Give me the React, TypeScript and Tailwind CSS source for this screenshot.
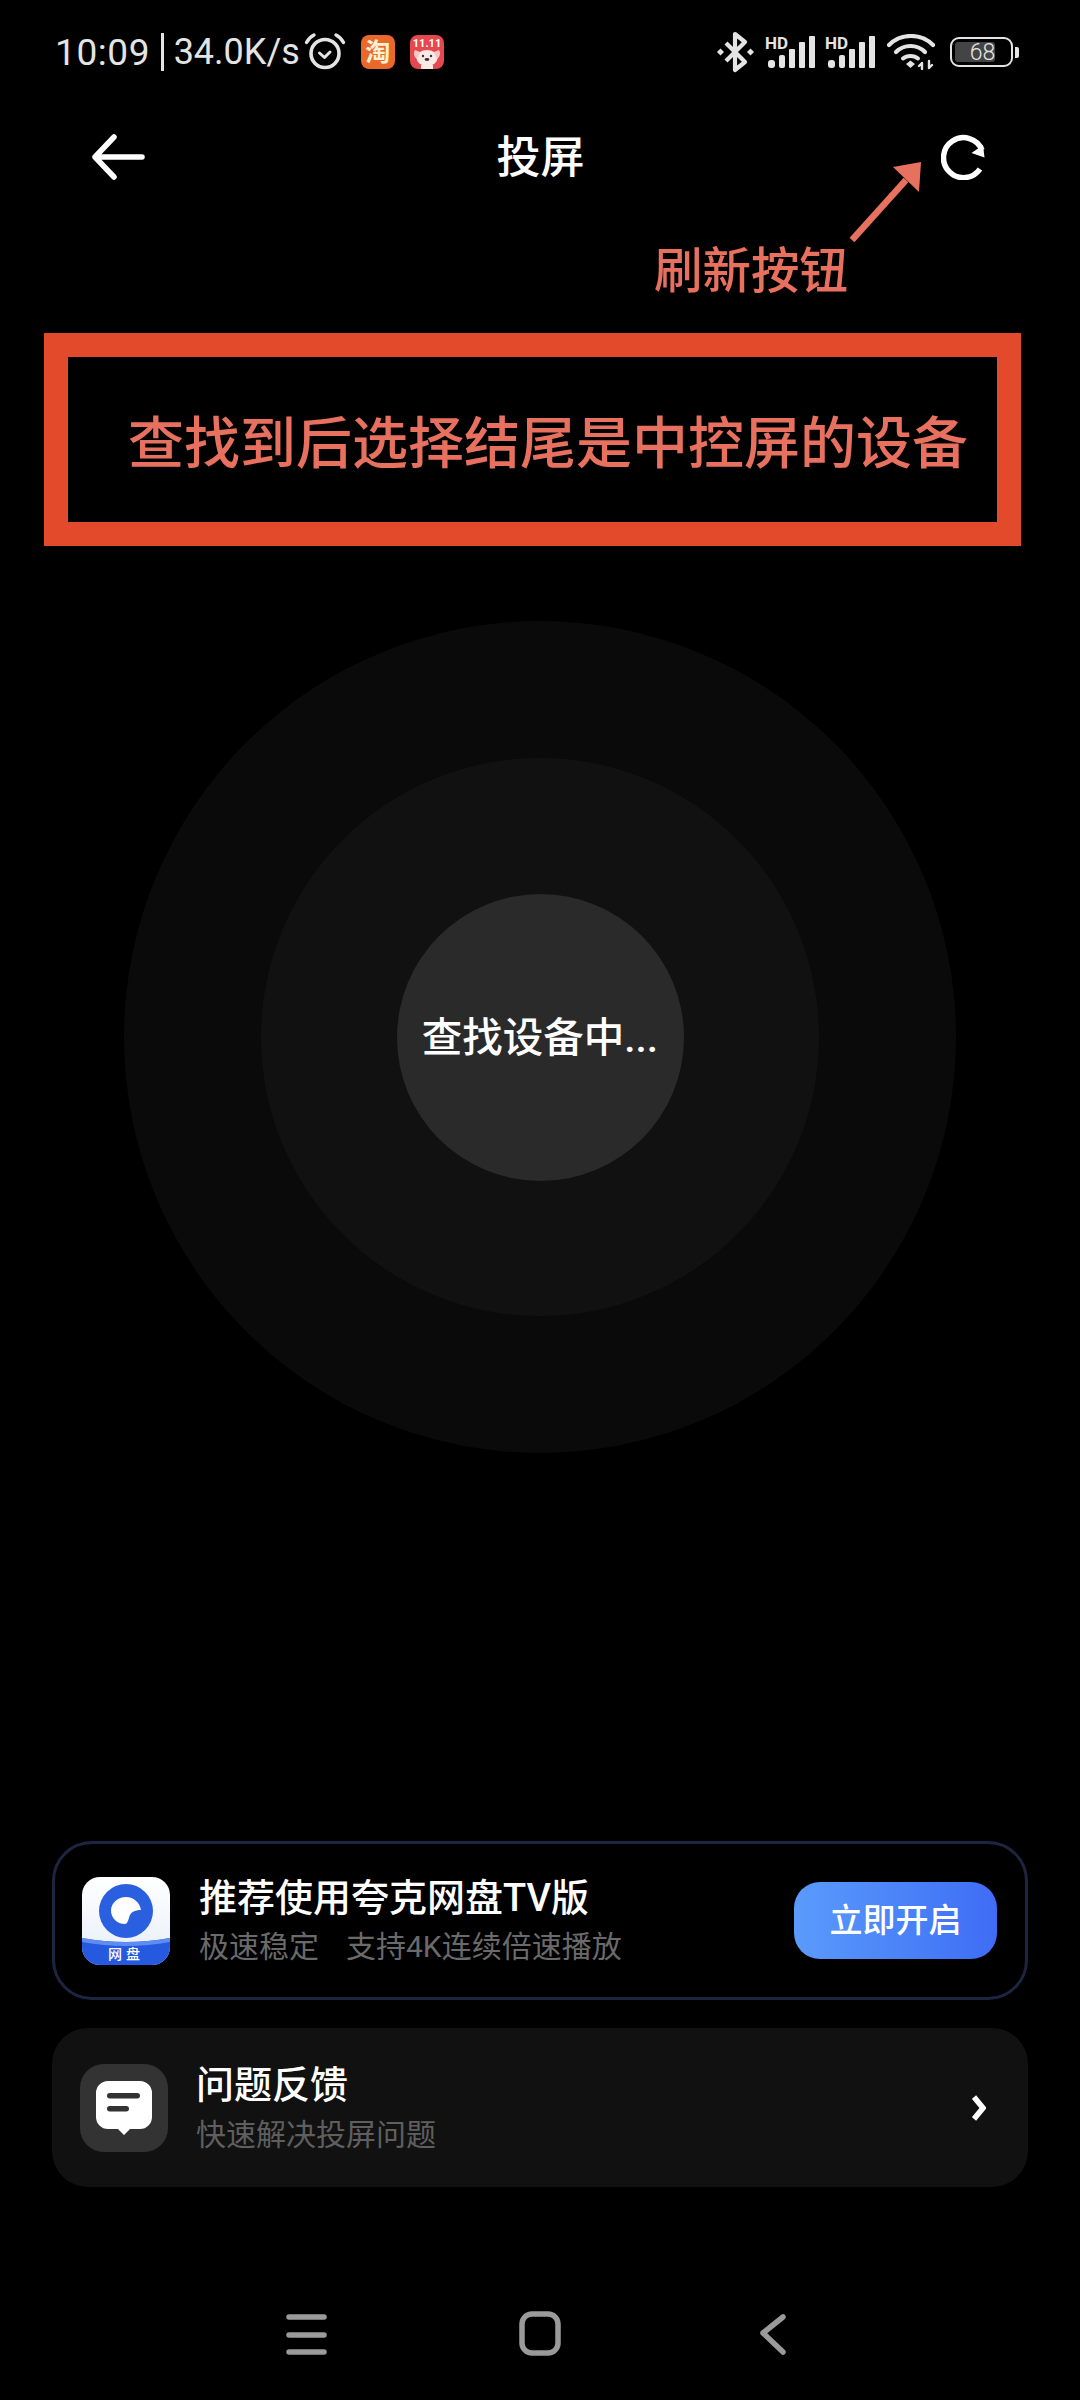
const cjk = { fontFamily: 'Roboto, "Noto Sans CJK SC", sans-serif' };

function Alarm() {
  return (
    <svg width="42" height="40" viewBox="0 0 42 40" fill="none" stroke="#e4e4e4" strokeLinecap="round" className="ml-[4px]">
      <circle cx="21" cy="21.5" r="14" strokeWidth="3.6" />
      <path d="M15.5 21l5 4.5 5.5-5.5" strokeWidth="3" strokeLinejoin="round" />
      <path d="M2.5 10.5C4.5 6.5 7 4.5 10 3M39.5 10.5C37.5 6.5 35 4.5 32 3" strokeWidth="3.4" />
    </svg>
  );
}

function TaobaoBadge() {
  return (
    <div className="ml-[15px] flex h-[34px] w-[34px] items-center justify-center rounded-[8px] bg-[#e8692a] text-[25px] font-bold leading-none text-[#fff1d6]">
      淘
    </div>
  );
}

function JdBadge() {
  return (
    <svg width="34" height="34" viewBox="0 0 34 34" className="ml-[15px]">
      <rect width="34" height="34" rx="8" fill="#e5484f" />
      <text x="17" y="11.5" textAnchor="middle" fontSize="11" fontWeight="700" fill="#fff" fontFamily="Roboto, sans-serif">
        11.11
      </text>
      <ellipse cx="17" cy="23" rx="10.5" ry="8" fill="#fbe9e6" />
      <path d="M5 15c-2 3-1 7 2 9l3-7zM29 15c2 3 1 7-2 9l-3-7z" fill="#f6c6c0" />
      <rect x="11" y="30" width="12" height="4" fill="#fbe9e6" />
      <circle cx="13" cy="21" r="1.2" fill="#333" />
      <circle cx="21" cy="21" r="1.2" fill="#333" />
      <ellipse cx="17" cy="24.5" rx="2.4" ry="1.4" fill="#333" />
    </svg>
  );
}

function Bluetooth() {
  return (
    <svg width="40" height="42" viewBox="0 0 40 42" fill="none" stroke="#e4e4e4" strokeWidth="4.2" strokeLinejoin="round">
      <path d="M10 12l19 19-10 8V3l10 8-19 19" />
      <rect x="2" y="18.5" width="5" height="5" fill="#e4e4e4" stroke="none" transform="rotate(45 4.5 21)" />
      <rect x="32" y="18.5" width="5" height="5" fill="#e4e4e4" stroke="none" transform="rotate(45 34.5 21)" />
    </svg>
  );
}

function Signal() {
  return (
    <div className="relative mt-[6px] h-[38px] w-[50px]">
      <span className="absolute left-[-2px] top-[-2px] text-[17px] font-bold leading-[18px] text-[#e4e4e4]" style={{ fontFamily: "Roboto, sans-serif" }}>
        HD
      </span>
      <svg width="50" height="38" viewBox="0 0 50 38" fill="#e4e4e4">
        <rect x="1" y="24" width="7" height="8" rx="3" />
        <rect x="12" y="19" width="6" height="13" rx="2" />
        <rect x="22" y="13" width="6" height="19" rx="1" />
        <rect x="32" y="6" width="6" height="26" rx="1" />
        <rect x="42" y="0" width="6" height="32" rx="1" />
      </svg>
    </div>
  );
}

function Wifi() {
  return (
    <svg width="48" height="36" viewBox="0 0 48 36" fill="none" stroke="#e4e4e4" strokeLinecap="round">
      <path d="M2 11C14 -1 34 -1 46 11" strokeWidth="4.2" />
      <path d="M9 18C17 10 30 10 38 18" strokeWidth="4.2" />
      <path d="M16 24.5C20 21 27 21 31 24.5" strokeWidth="4" />
      <path d="M19 30l4.5-3.5L28 30l-4.5 4z" fill="#e4e4e4" stroke="none" />
      <path d="M35 35v-6M35 29l-3 3M42 27v7M42 34l3-3" strokeWidth="2.4" />
    </svg>
  );
}

function Battery() {
  return (
    <div className="ml-[15px] flex items-center">
      <div className="relative flex h-[30px] w-[63px] items-center rounded-[9px] border-[2.5px] border-[#e4e4e4] p-[3px]">
        <div className="h-full w-[40px] rounded-[3px] bg-[#444]" />
        <span className="absolute inset-0 flex items-center justify-center pl-[2px] text-[23px] font-light leading-none text-[#e4e4e4]" style={{ fontFamily: "Roboto, sans-serif" }}>
          68
        </span>
      </div>
      <div className="ml-[2px] h-[11px] w-[4px] rounded-r-[2px] bg-[#e4e4e4]" />
    </div>
  );
}

function StatusBar() {
  return (
    <div className="flex h-[104px] shrink-0 items-center justify-between pl-[55px] pr-[61px]">
      <div className="flex items-center text-[37px] font-normal leading-none text-[#e4e4e4]">
        <span className="tracking-[0.6px]">10:09</span>
        <span className="ml-[11px] mr-[10px] h-[38px] w-[2.5px] bg-[#e4e4e4]" />
        <span className="text-[36px]">34.0K/s</span>
        <Alarm />
        <TaobaoBadge />
        <JdBadge />
      </div>
      <div className="flex items-center">
        <Bluetooth />
        <div className="ml-[11px] flex gap-[10px]">
          <Signal />
          <Signal />
        </div>
        <div className="ml-[10px]">
          <Wifi />
        </div>
        <Battery />
      </div>
    </div>
  );
}

function NavHeader() {
  return (
    <div className="relative flex h-[106px] shrink-0 items-center justify-between pl-[90px] pr-[93px]">
      <svg width="56" height="46" viewBox="0 0 56 46" fill="none" stroke="#fff" strokeWidth="5.5" strokeLinecap="round" strokeLinejoin="round">
        <path d="M52 23H6M24 3L5 23l19 20" />
      </svg>
      <span className="-ml-[6px] pt-[2px] text-[44px] font-medium leading-none text-white">投屏</span>
      <svg width="46" height="46" viewBox="0 0 46 46" fill="none">
        <path d="M41 16A20 20 0 1 0 39 35" stroke="#fff" strokeWidth="5.5" />
        <path d="M43.5 23.5L30.5 19 42 11z" fill="#fff" />
      </svg>
      {/* flèche d'annotation vers le bouton */}
      <svg className="absolute left-[838px] top-[50px]" width="90" height="90" viewBox="0 0 90 90" fill="none">
        <path d="M14 86L68 26" stroke="#e8705f" strokeWidth="6.5" />
        <path d="M83 8L55 13 81 38z" fill="#e8705f" />
      </svg>
    </div>
  );
}

function QuarkIcon() {
  return (
    <svg width="88" height="88" viewBox="0 0 88 88" className="shrink-0">
      <defs>
        <linearGradient id="quarkTop" x1="0" y1="0" x2="0" y2="1">
          <stop offset="0" stopColor="#ffffff" />
          <stop offset="1" stopColor="#e6edf8" />
        </linearGradient>
        <clipPath id="quarkClip">
          <rect width="88" height="88" rx="18" />
        </clipPath>
      </defs>
      <g clipPath="url(#quarkClip)">
        <rect width="88" height="88" fill="url(#quarkTop)" />
        <path d="M0 61Q44 69 88 61V88H0z" fill="#2459e0" />
        <path d="M0 61Q44 69 88 61V65Q44 73 0 65z" fill="#5f8cf0" />
      </g>
      <circle cx="44" cy="34" r="27" fill="#2a5fe0" />
      <path d="M44 20c8 0 14 6 15 13-6 0-11 2-12 8-1 3-2 6-4 6-8 0-14-6-14-13.5S36 20 44 20z" fill="#fff" />
      <text x="44" y="82" textAnchor="middle" fontSize="14" fontWeight="500" letterSpacing="4" fill="#fff" fontFamily='"Noto Sans CJK SC", sans-serif'>
        网盘
      </text>
    </svg>
  );
}

function FeedbackIcon() {
  return (
    <div className="flex h-[88px] w-[88px] shrink-0 items-center justify-center rounded-[24px] bg-[#333]">
      <svg width="56" height="54" viewBox="0 0 56 54">
        <path d="M12 0h32a12 12 0 0 1 12 12v24a12 12 0 0 1-12 12H34l-6 6-6-6H12A12 12 0 0 1 0 36V12A12 12 0 0 1 12 0z" fill="#fff" />
        <rect x="11" y="12" width="33" height="5.5" rx="2.75" fill="#333" />
        <rect x="11" y="25" width="22" height="5.5" rx="2.75" fill="#333" />
      </svg>
    </div>
  );
}

function RadarCircles() {
  return (
    <div className="mx-auto mt-[75px] flex h-[832px] w-[832px] shrink-0 items-center justify-center rounded-full bg-[#0a0a0a]">
      <div className="flex h-[558px] w-[558px] items-center justify-center rounded-full bg-[#111]">
        <div className="flex h-[287px] w-[287px] items-center justify-center rounded-full bg-[#2a2a2a] pt-[2px] text-[40.5px] font-medium leading-none text-white">
          查找设备中...
        </div>
      </div>
    </div>
  );
}

function NavKeys() {
  return (
    <div className="relative mt-auto h-[213px] shrink-0">
      <svg className="absolute left-0 top-0" width="1080" height="213" viewBox="0 0 1080 213" fill="none" stroke="#9a9a9a" strokeWidth="5.5" strokeLinecap="round" strokeLinejoin="round">
        <path d="M289 130h35M289 148h35M289 165h35" />
        <rect x="522" y="127" width="36" height="39" rx="10" />
        <path d="M783 130l-20 16 20 19" />
      </svg>
    </div>
  );
}

export default function App() {
  return (
    <div className="flex h-[2400px] w-[1080px] flex-col bg-black" style={cjk}>
      <StatusBar />
      <NavHeader />
      <div className="flex h-[123px] shrink-0 items-start pl-[654px] pt-[38px] text-[48.5px] font-medium leading-[48px] text-[#e8705f]">
        刷新按钮
      </div>
      <div className="ml-[44px] flex h-[213px] w-[977px] shrink-0 items-center border-[24px] border-[#e24a2b] pl-[60px] pt-[8px] text-[56px] font-medium leading-none whitespace-nowrap text-[#e8705f]">
        查找到后选择结尾是中控屏的设备
      </div>
      <RadarCircles />
      <div className="mx-[52px] mt-[388px] flex h-[159px] w-[976px] shrink-0 items-center rounded-[40px] border-[3px] border-[#1d2540] pl-[27px] pr-[28px]">
        <QuarkIcon />
        <div className="ml-[29px] flex flex-col">
          <span className="text-[38px] font-medium leading-[44px] text-white">推荐使用夸克网盘TV版</span>
          <span className="mt-[9px] text-[30px] leading-[36px] text-[#6a6a6a]">
            极速稳定<span className="ml-[27px]">支持4K连续倍速播放</span>
          </span>
        </div>
        <div className="ml-auto flex h-[77px] w-[203px] items-center justify-center rounded-[26px] bg-gradient-to-r from-[#5b9bfb] to-[#3f6cf5] text-[33px] font-medium leading-none text-white">
          立即开启
        </div>
      </div>
      <div className="mx-[52px] mt-[28px] flex h-[159px] w-[976px] shrink-0 items-center rounded-[36px] bg-[#111] pl-[28px] pr-[42px]">
        <FeedbackIcon />
        <div className="ml-[28px] flex flex-col">
          <span className="text-[38px] font-medium leading-[44px] text-white">问题反馈</span>
          <span className="mt-[10px] text-[30px] leading-[36px] text-[#5f5f5f]">快速解决投屏问题</span>
        </div>
        <svg className="ml-auto" width="14" height="26" viewBox="0 0 14 26" fill="none" stroke="#fff" strokeWidth="5.5">
          <path d="M2 2l9 11-9 11" />
        </svg>
      </div>
      <NavKeys />
    </div>
  );
}
